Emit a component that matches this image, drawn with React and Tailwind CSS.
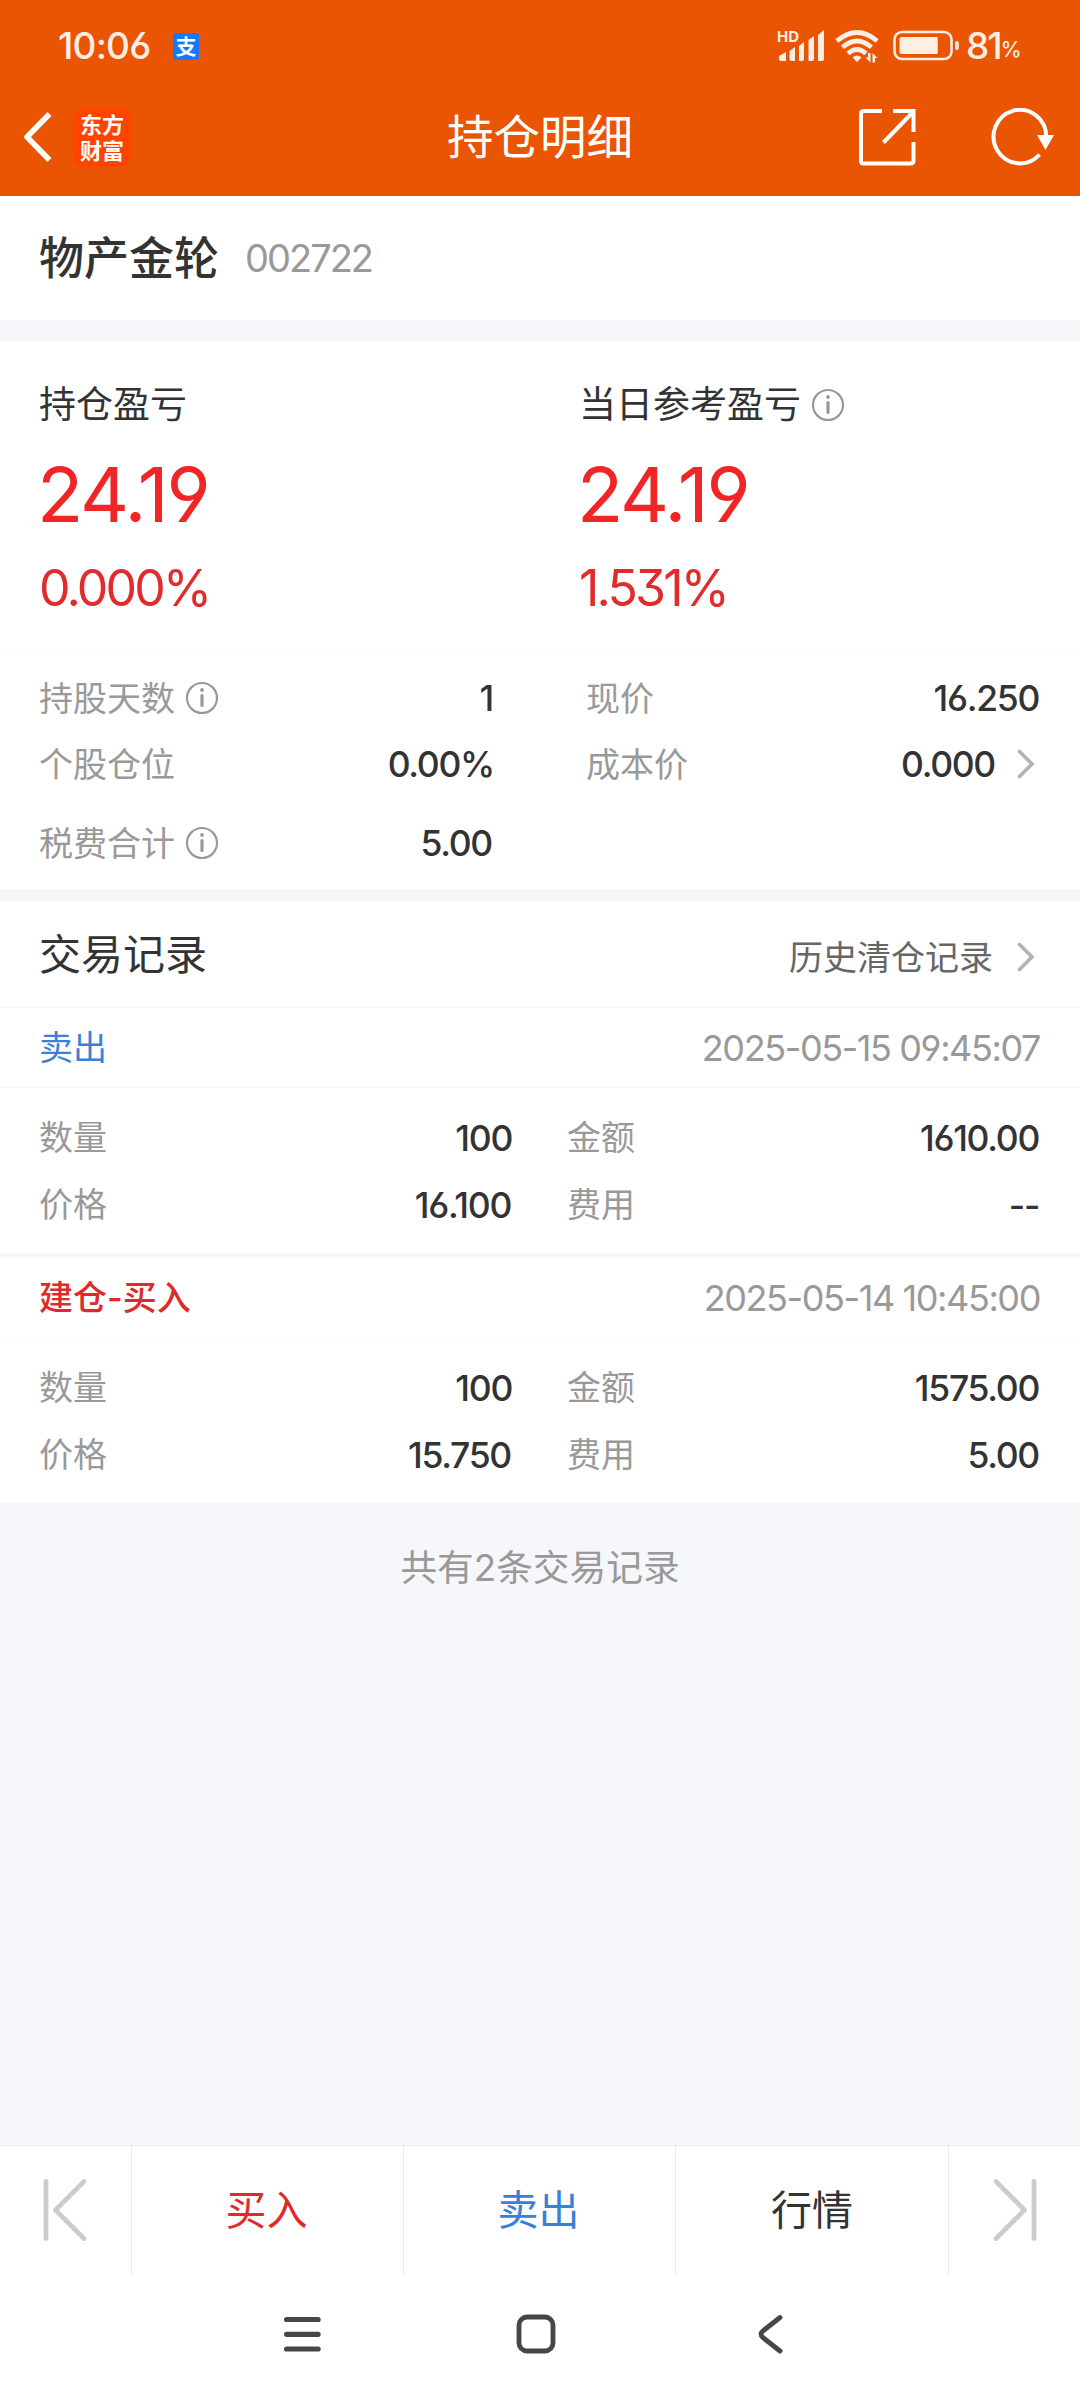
import React from "react";

const trades = [
  {
    type: "卖出",
    typeClass: "text-[#3a80d8]",
    time: "2025-05-15 09:45:07",
    amount: "100",
    total: "1610.00",
    price: "16.100",
    fee: "--",
  },
  {
    type: "建仓-买入",
    typeClass: "text-[#e02a2a] font-medium",
    time: "2025-05-14 10:45:00",
    amount: "100",
    total: "1575.00",
    price: "15.750",
    fee: "5.00",
  },
];

const App = () => {
  return (
    <div className="flex h-[2400px] w-[1080px] flex-col overflow-hidden bg-[#f6f7fa] font-['Inter','Noto_Sans_CJK_SC',sans-serif] whitespace-nowrap text-[#333] [font-feature-settings:'cv03','cv04','cv09']">
      <div className="h-[196px] shrink-0 bg-[#ea5504] text-white">
        <StatusBar />
        <NavBar />
      </div>
      <StockTitle />
      <Profit />
      <PositionInfo />
      <TradeHeader />
      {trades.map((trade, index) => (
        <TradeItem key={trade.time} trade={trade} last={index === trades.length - 1} />
      ))}
      <p className="flex h-[129px] items-center justify-center text-[36.700px] text-[#999]">
        共有2条交易记录
      </p>
      <div className="flex-1" />
      <ActionBar />
      <SystemBar />
    </div>
  );
};

const StatusBar = () => {
  return (
    <div className="flex h-[92px] items-center pl-[58px] text-[#ffeee4]">
      <span className="w-[115px] text-[37px] font-medium tracking-[-0.800px]">10:06</span>
      <span className="flex h-[27px] w-[26px] items-center justify-center rounded-[3px] bg-[#1677ff] text-[21px] leading-none font-bold text-white">
        支
      </span>
      <div className="ml-[578px] flex items-center">
        <svg className="overflow-visible" width="48" height="34" viewBox="0 0 48 34" fill="currentColor">
          <text x="0" y="13" fontSize="15" fontWeight="700">
            HD
          </text>
          <path d="M2 27l7-4v9H4q-2 0-2-2zM12.500 22l5.500-4v14h-3.500q-2 0-2-2zM22 17l5-4v17q0 2-2 2h-3zM31.500 11l5.500-4v23q0 2-2 2h-3.500zM41 6l6-5v29q0 2-2 2h-4z" />
        </svg>
        <svg className="ml-[10px]" width="44" height="34" viewBox="0 0 44 34" fill="none" stroke="currentColor" strokeWidth="4.800">
          <path d="M1.800 12q20.200-17 40.400 0M7.500 18.300q14.500-12.500 29 0M13 24.500q9-8 18 0" />
          <path d="M17.500 28.500q4.500-4 9 0l-4.500 4.500z" fill="currentColor" stroke="none" />
          <path d="M30.500 28.500h2.500v-4.500h2.500v9.500zM37.500 33.500v-9.500l5 5h-2.500v4.500z" fill="currentColor" stroke="none" />
        </svg>
        <svg className="ml-[14px]" width="68" height="32" viewBox="0 0 68 32">
          <rect x="1.500" y="2" width="57" height="27" rx="7.500" fill="none" stroke="currentColor" strokeWidth="2.600" />
          <rect x="6.500" y="7" width="38" height="17" rx="2.500" fill="currentColor" />
          <rect x="41" y="7" width="3.500" height="17" fill="currentColor" />
          <rect x="62" y="11" width="3.800" height="9" rx="1.900" fill="currentColor" />
        </svg>
        <span className="ml-[5px] text-[37px] font-medium tracking-[-2px]">81</span>
        <span className="mt-[8px] text-[21px] font-medium">%</span>
      </div>
    </div>
  );
};

const NavBar = () => {
  return (
    <div className="grid h-[90px] grid-cols-[1fr_auto_1fr] items-center">
      <div className="flex items-center pl-[22px]">
        <svg width="30" height="50" viewBox="0 0 30 50" fill="none" stroke="currentColor" strokeWidth="5.500" strokeLinejoin="round">
          <path d="M27.500 2L5 25l22.500 23" />
        </svg>
        <div className="ml-[21px] flex h-[59px] w-[58px] items-center justify-center rounded-[12px] bg-[#ff4400] pb-[2px]">
          <span className="w-[44px] font-['Noto_Sans_CJK_SC',sans-serif] text-[22px] leading-[26px] font-bold break-all whitespace-normal">
            东方财富
          </span>
        </div>
      </div>
      <h1 className="text-[46.500px] leading-none">持仓明细</h1>
      <div className="flex items-center justify-end pr-[25px]">
        <svg width="58" height="58" viewBox="0 0 58 58" fill="none" stroke="currentColor" strokeWidth="4">
          <path d="M24 3H6q-3 0-3 3v47q0 2.500 2.500 2.500h47q3 0 3-3V34" />
          <path d="M35 3h20.500v21M55 4L25.500 34.500" />
        </svg>
        <svg className="ml-[75px]" width="64" height="58" viewBox="0 0 64 58" fill="none" stroke="currentColor" strokeWidth="4">
          <path d="M48.500 46.500A26.300 26.800 0 1 1 55.200 29" />
          <path d="M46 27h17l-8.500 15z" fill="currentColor" stroke="none" />
        </svg>
      </div>
    </div>
  );
};

const StockTitle = () => {
  return (
    <div className="flex h-[124px] shrink-0 items-center bg-white px-[39px]">
      <h2 className="text-[45px] leading-none font-medium">物产金轮</h2>
      <span className="ml-[26px] text-[38px] tracking-[-2px] text-[#999]">002722</span>
    </div>
  );
};

const Profit = () => {
  return (
    <div className="mt-[21px] grid h-[310px] shrink-0 grid-cols-2 bg-white pt-[37px]">
      <ProfitColumn title="持仓盈亏" value="24.19" percent="0.000%" />
      <ProfitColumn title="当日参考盈亏" value="24.19" percent="1.531%" info />
    </div>
  );
};

const ProfitColumn = ({ title, value, percent, info }) => {
  return (
    <div className="pl-[39px]">
      <div className="flex h-[54px] items-center text-[37px]">
        {title}
        {info && <InfoIcon />}
      </div>
      <div className="-ml-[2px] flex h-[126px] items-center pb-[3px] text-[76px] tracking-[-2.100px] text-[#f02525]">
        {value}
      </div>
      <div className="flex h-[61px] items-center text-[50px] tracking-[-2.800px] text-[#e02c2c]">{percent}</div>
    </div>
  );
};

const PositionInfo = () => {
  return (
    <div className="mt-px h-[237px] shrink-0 bg-white pt-[13px]">
      <div className="flex h-[66px] items-center">
        <Field label="持股天数" value="1" info className="w-[493px] pl-[39px]" />
        <Field label="现价" value="16.250" className="ml-[93px] w-[453px]" />
      </div>
      <div className="flex h-[66px] items-center">
        <Field label="个股仓位" value="0.00%" className="w-[494px] pl-[39px]" />
        <Field label="成本价" value="0.000" className="ml-[92px] w-[409px]" />
        <RightArrow className="ml-[21px]" />
      </div>
      <div className="flex h-[92px] items-center">
        <Field label="税费合计" value="5.00" info className="w-[492px] pl-[39px]" />
      </div>
    </div>
  );
};

const Field = ({ label, value, info, className }) => {
  return (
    <div className={`flex items-center ${className}`}>
      <span className="text-[34px] text-[#999]">{label}</span>
      {info && <InfoIcon />}
      <span className="ml-auto pt-[2px] text-[35.500px] font-[450] tracking-[-1.300px]">{value}</span>
    </div>
  );
};

const TradeHeader = () => {
  return (
    <div className="mt-[13px] flex h-[105px] shrink-0 items-center bg-white pl-[39px]">
      <h3 className="text-[42px]">交易记录</h3>
      <span className="mt-[5px] ml-auto text-[34px] text-[#666]">历史清仓记录</span>
      <RightArrow className="mt-[4px] mr-[44px] ml-[23px]" />
    </div>
  );
};

const TradeItem = ({ trade, last }) => {
  return (
    <div className={last ? "mt-[5px] shrink-0" : "mt-px shrink-0"}>
      <div className="flex h-[79px] items-center justify-between bg-white pr-[40px] pl-[39px] text-[34px]">
        <span className={trade.typeClass}>{trade.type}</span>
        <span className="text-[36px] tracking-[-1.400px] text-[#999]">{trade.time}</span>
      </div>
      <div className="mt-px h-[165px] bg-white pt-[16px]">
        <div className="flex h-[67px] items-center">
          <Field label="数量" value={trade.amount} className="w-[512px] pl-[39px]" />
          <Field label="金额" value={trade.total} className="ml-[55px] w-[472px]" />
        </div>
        <div className="flex h-[67px] items-center">
          <Field label="价格" value={trade.price} className="w-[511px] pl-[39px]" />
          <Field label="费用" value={trade.fee} className="ml-[56px] w-[472px]" />
        </div>
      </div>
    </div>
  );
};

const ActionBar = () => {
  return (
    <div className="grid h-[131px] shrink-0 grid-cols-[132px_272px_272px_273px_131px] divide-x divide-[#ebecee] border-t border-[#e8eaed] bg-white text-[41px]">
      <div className="flex items-center justify-center pr-[2px] pb-[3px]">
        <EndArrow />
      </div>
      <div className="flex items-center justify-center pr-[2px]">
        <span className="text-[#e02a2a]">买入</span>
      </div>
      <div className="flex items-center justify-center pr-[2px]">
        <span className="text-[#3a80d8]">卖出</span>
      </div>
      <div className="flex items-center justify-center">行情</div>
      <div className="flex items-center justify-center pb-[3px]">
        <EndArrow className="rotate-180" />
      </div>
    </div>
  );
};

const SystemBar = () => {
  return (
    <div className="flex h-[124px] shrink-0 items-start bg-white pt-[37px] pl-[282px] text-[#464646]">
      <svg width="40" height="42" viewBox="0 0 40 42" stroke="currentColor" strokeWidth="5.200" strokeLinecap="round">
        <path d="M4.600 6.500h31.500M4.600 21.300h31.500M4.600 36h31.500" />
      </svg>
      <svg className="ml-[193px]" width="42" height="42" viewBox="0 0 42 42" fill="none" stroke="currentColor" strokeWidth="4.800">
        <rect x="4" y="4" width="34" height="34" rx="8" />
      </svg>
      <svg className="ml-[200px]" width="28" height="42" viewBox="0 0 28 42" fill="none" stroke="currentColor" strokeWidth="4.800" strokeLinecap="round">
        <path d="M23 4.500L5.800 18q-3.500 3 0 6.500L23 38" />
      </svg>
    </div>
  );
};

const InfoIcon = () => {
  return (
    <svg className="ml-[10px]" width="34" height="34" viewBox="0 0 34 34" fill="none" stroke="#999" strokeWidth="2.200">
      <circle cx="17" cy="17" r="15" />
      <path d="M17 14.500v10" strokeWidth="3.200" strokeLinecap="round" />
      <circle cx="17" cy="9" r="1.900" fill="#999" stroke="none" />
    </svg>
  );
};

const RightArrow = ({ className }) => {
  return (
    <svg className={className} width="20" height="30" viewBox="0 0 20 30" fill="none" stroke="#b3b3b3" strokeWidth="3.600" strokeLinecap="round">
      <path d="M3.500 2.500L16 15 3.500 27.500" />
    </svg>
  );
};

const EndArrow = ({ className }) => {
  return (
    <svg className={className} width="44" height="64" viewBox="0 0 44 64" fill="none" stroke="#ccc" strokeWidth="4.800" strokeLinecap="round" strokeLinejoin="round">
      <path d="M3 3.500v57M41 3.500L12.500 32 41 60.500" />
    </svg>
  );
};

export default App;
